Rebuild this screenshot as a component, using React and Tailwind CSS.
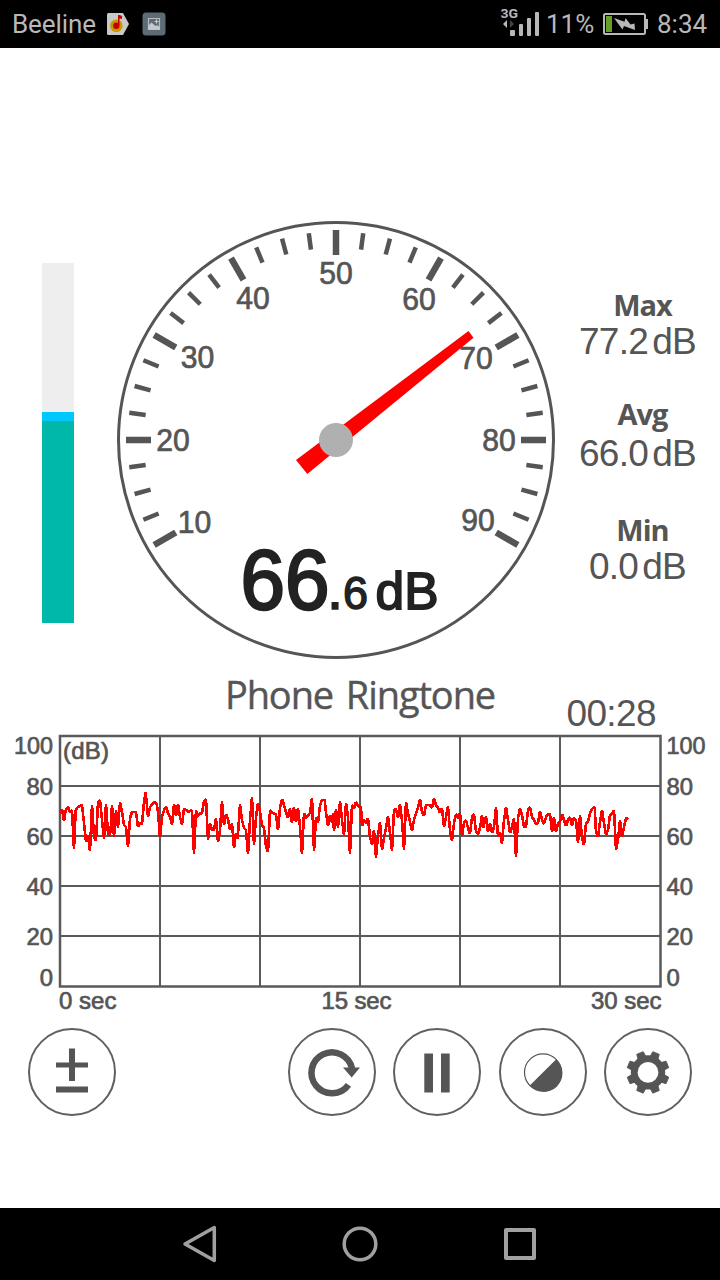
import { useState } from 'react';

const INK = '#555555';

const GAUGE_LABELS = [
  { value: 10, x: 194.5, y: 533 },
  { value: 20, x: 173, y: 451 },
  { value: 30, x: 197.5, y: 368 },
  { value: 40, x: 253, y: 308.5 },
  { value: 50, x: 336, y: 284 },
  { value: 60, x: 419, y: 309.5 },
  { value: 70, x: 476, y: 369 },
  { value: 80, x: 499, y: 451 },
  { value: 90, x: 478, y: 531 },
];

const STATS = [
  { label: 'Max', value: '77.2', className: 'mt-[70px]', valueClass: 'mt-px' },
  { label: 'Avg', value: '66.0', className: 'mt-9', valueClass: 'mt-1' },
  { label: 'Min', value: '0.0', className: 'mt-10', valueClass: 'mt-px' },
];

const Y_AXIS = [
  { value: 100, y: 754, width: 39 },
  { value: 80, y: 794.5, width: 26.5 },
  { value: 60, y: 844.5, width: 26.5 },
  { value: 40, y: 895, width: 26.5 },
  { value: 20, y: 945, width: 26.5 },
  { value: 0, y: 986, width: 13.3 },
];

// recorded samples as chart points
const SAMPLES = `60,813 62,809 64,821 65.7,810 68,807 70,812 72,810 74,849 75.7,810 78,807 82,805 84,823 86,842 88,835 90,851
92,805 94,837 96,841 98,803 100,800 102,820 104,839 106,804 108,834 110,835 111,824 112,805 114,837 116,810 118,828 120,802
122,812 124,825 126,827 128,847 130,818 132,812 136,812 138,827 140,823 142,824 144,802 145.7,792 148,817 150,807 154,802
156.7,804 158,812 160,837 162,817 164,810 166,807 168,813 170,817 172,825 174,804 176,816 178,804 180,817 182,825 184,809
186.7,810 188.7,812 192,810 194,854 196,810 197,817 199,814 202,813 204,801 206,799 208,840 210,823 212,830 214,830 216,818
218,842 220,830 222,801 224,825 226,814 228,819 230,830 232,823 234,848 236,833 237.7,839 240,804 242,820 244,828 246,830
248,854 250,820 252,797 254,845 256,817 258,803 260,812 262,825 264,828 266,847 268,852 270,810 272,813 276,814 278,830
280,808 282,799 284,805 286,812 288,818 290,808 292,823 294,807 296,822 298,808 300,827 302,854 304,813 306,818 310,813
312,798 314,851 316,817 318,823 320,805 322,800 324.7,800 326,813 328,826 330,815 332,823 333,813 334,831 336,809 338,828
340,801 342,820 344,835 346,803 348,817 350,854 352,805 354,808 356,802 358,806 361,807 362,826 364,820 366,823 368,818
370,837 372,845 374,830 376,858 378,835 380,822 382,850 384,838 386,828 388,816 390,833 392,851 394,810 396,809 398,818
400,804 402,820 404,850 406,802 408,813 410,822 412,831 414,820 416,813 418,808 420,799 422,812 424,816 426,805 430,805
432,808 434,798 436,805 438,808 440,813 442,808 444,827 446,817 448,806 450,830 452,841 454,823 456,814 458,818 460,813
462,836 464,823 466,820 468,828 470,834 472,817 474,814 476,832 478,834 480,828 482,815 483.3,828 486,816 488,832 490,823
492,833 494,827 496,807 498,837 500,832 502,844 504,820 506,807 508,820 510,833 512,827 514,818 516,857 518,818 520,808
522,815 524,827 526,827 528,810 530,807 532,817 534,820 536,824 538,823 540,811 542,820 544,824 546,817 548,814 550,814
552,832 554,817 556,832 558,823 560,822 562,814 564,820 566,826 568,820 570,817 572,826 573.3,818 576,820 578,843 580,815
582,838 584,845 586,823 588,822 590,813 592,809 594.7,807 596,832 598,837 600,822 602,810 604,823 606,835 608,830 610,815
612,814 614,810 616,850 618,840 620,820 622,837 624,827 626,818 628.7,819`;

function StatusBar() {
  return (
    <header className="flex h-12 items-center bg-black font-[Roboto,sans-serif] text-[26px] leading-12 text-[#b8b8b8]">
      <span className="ml-3 w-[84px] tracking-[-0.1px]">Beeline</span>
      <svg className="ml-2.5" width="24" height="24" viewBox="106 12 24 24">
        <path d="M108.5 13h14.5l6 11-6 11h-14.500q-1.500 0-1.500-1.500v-19q0-1.500 1.500-1.500z" fill="#c9c9c9" />
        <circle cx="116.300" cy="25.700" r="6.300" fill="#c99700" />
        <circle cx="116.300" cy="25.700" r="3.200" fill="#c00000" />
        <path d="M118 25.500v-10.500h1.500l2.500 1v3l-2.500-.5v7z" fill="#c80000" />
      </svg>
      <svg className="ml-3" width="24" height="24" viewBox="142 12 24 24">
        <rect x="142.500" y="12.500" width="23" height="23" rx="3.500" fill="#5d6b75" />
        <path d="M148.500 18.500h11v11h-11z" fill="none" stroke="#b8bcbe" strokeWidth="1.200" />
        <path d="M148.500 29.500v-4l3-3 4 3.500 1.500-1 2.500 2v2.500z" fill="#c5c9cb" />
        <path d="M156.500 19.500v4M154.500 21.500h4" stroke="#c5c9cb" strokeWidth="1.200" />
      </svg>
      <svg className="ml-auto" width="40" height="36" viewBox="501 6 40 36">
        <text x="501.500" y="18" fontSize="13.500" fontWeight="700" fill="#b8b8b8" textLength="17.500" lengthAdjust="spacingAndGlyphs">3G</text>
        <path d="M508 20v8l-4-4z" fill="#b8b8b8" />
        <path d="M511 20v8l4-4z" fill="#444444" />
        <g fill="#b8b8b8">
          <rect x="511" y="30" width="5" height="6" rx="1" />
          <rect x="520" y="24" width="4" height="12" rx="1" />
          <rect x="528" y="18" width="4" height="18" rx="1" />
          <rect x="536" y="12" width="4" height="24" rx="1" />
        </g>
      </svg>
      <span className="ml-[5px] w-[51px] pl-px">11%</span>
      <svg className="ml-1.5" width="46" height="24" viewBox="602 12 46 24">
        <rect x="604" y="14" width="41" height="20" rx="1.500" fill="none" stroke="#b8b8b8" strokeWidth="2" />
        <path d="M646 19h2v10h-2z" fill="#b8b8b8" />
        <rect x="606" y="16" width="6" height="16" fill="#669f28" />
        <path d="M614 18L624.500 21.800L625.500 18L630.500 24.500L634.500 23.500L635 30L624 26L622.500 29.500L618 23.500z" fill="#b8b8b8" />
      </svg>
      <span className="ml-2 w-16 pl-px">8:34</span>
    </header>
  );
}

function Gauge() {
  const ticks = Array.from({ length: 33 }, (_, i) => ({ angle: -120 + i * 7.5, major: i % 4 === 0 }));

  return (
    <svg
      className="ml-[41px] shrink-0 font-['Liberation_Sans',Arial,sans-serif]"
      width="442"
      height="442"
      viewBox="115 219 442 442"
    >
      <circle cx="336" cy="440" r="217.5" fill="none" stroke={INK} strokeWidth="3" />
      {ticks.map(({ angle, major }) => (
        <line
          key={angle}
          x1="336"
          x2="336"
          y1={major ? 230 : 231.5}
          y2={major ? 255 : 248}
          stroke={INK}
          strokeWidth={major ? 6.5 : 4.5}
          transform={`rotate(${angle} 336 440)`}
        />
      ))}
      <g fill={INK} stroke={INK} strokeWidth="0.7" fontSize="31" textAnchor="middle">
        {GAUGE_LABELS.map(({ value, x, y }) => (
          <text key={value} x={x} y={y} textLength="33.500" lengthAdjust="spacingAndGlyphs">{value}</text>
        ))}
      </g>
      <path d="M296 460L468.500 331L473.500 337.700L307.300 474z" fill="#ff0000" />
      <circle cx="336" cy="440" r="17" fill="#b0b0b0" />
      <g fill="#222222" stroke="#222222">
        <text x="240.500" y="609" fontSize="85" strokeWidth="2.500" textLength="89" lengthAdjust="spacingAndGlyphs">66</text>
        <text x="327" y="609" fontSize="58" strokeWidth="1.500">.</text>
        <text x="343" y="609" fontSize="47" strokeWidth="1.500" textLength="25" lengthAdjust="spacingAndGlyphs">6</text>
        <text x="375.500" y="608.500" fontSize="52" strokeWidth="1.800" textLength="63" lengthAdjust="spacingAndGlyphs">dB</text>
      </g>
    </svg>
  );
}

function Chart() {
  return (
    <svg
      className="-mt-2 font-['Liberation_Sans',Arial,sans-serif]"
      width="720"
      height="290"
      viewBox="0 726 720 290"
    >
      <g stroke="#5a5a5a" strokeWidth="2" fill="none">
        <path d="M160 736V986M260 736V986M360 736V986M460 736V986M560 736V986" />
        <path d="M60 786H660M60 836H660M60 886H660M60 936H660" />
        <rect x="60" y="736" width="600.500" height="250.500" strokeWidth="2.500" />
      </g>
      <g fill={INK} stroke={INK} strokeWidth="0.700" fontSize="24">
        {Y_AXIS.map(({ value, y, width }) => (
          <g key={value}>
            <text x="53" y={y} textAnchor="end" textLength={width} lengthAdjust="spacingAndGlyphs">{value}</text>
            <text x="666.500" y={y} textLength={width} lengthAdjust="spacingAndGlyphs">{value}</text>
          </g>
        ))}
        <text x="63" y="758.500" textLength="46">(dB)</text>
        <text x="59" y="1008.500" textLength="57.500">0 sec</text>
        <text x="321.500" y="1008.500" textLength="70">15 sec</text>
        <text x="591" y="1008.500" textLength="70.500">30 sec</text>
      </g>
      <polyline points={SAMPLES} fill="none" stroke="#ff0000" strokeWidth="2.600" strokeLinejoin="bevel" shapeRendering="crispEdges" />
    </svg>
  );
}

function RoundButton({ label, onClick, className = '', children }) {
  return (
    <button
      aria-label={label}
      onClick={onClick}
      className={`flex size-22 items-center justify-center rounded-full border-2 border-[#606060] ${className}`}
    >
      <svg width="60" height="60" viewBox="-30 -30.400 60 60" fill={INK}>
        {children}
      </svg>
    </button>
  );
}

function Toolbar() {
  const [paused, setPaused] = useState(false);

  return (
    <div className="mt-3 flex px-7">
      <RoundButton label="Calibrate">
        <path d="M-3-24h6v14h13v5h-13v13.500h-6v-13.500h-13v-5h13zM-16 14h32v6h-32z" />
      </RoundButton>
      <div className="ml-auto flex gap-[17.3px]">
        <RoundButton label="Restart">
          <path d="M16.500 12.500A20.500 20.500 0 1 1 20-4" fill="none" stroke={INK} strokeWidth="6.500" />
          <path d="M11-5H28L19.700 5z" />
        </RoundButton>
        <RoundButton label={paused ? 'Resume' : 'Pause'} onClick={() => setPaused(!paused)}>
          {paused ? <path d="M-11-19L19 0L-11 19z" /> : <path d="M-12.700-19h8.700v39h-8.700zM4-19h8.700v39h-8.700z" />}
        </RoundButton>
        <RoundButton label="Theme">
          <circle r="18.500" fill="none" stroke={INK} strokeWidth="1.200" />
          <path d="M13.200-13.200A18.700 18.700 0 1 1-13.200 13.200z" />
        </RoundButton>
        <RoundButton label="Settings">
          <circle r="13.800" fill="none" stroke={INK} strokeWidth="6.800" />
          {[22.5, 67.5, 112.5, 157.5, 202.5, 247.5, 292.5, 337.5].map((angle) => (
            <path key={angle} d="M-4.200-15L-3.500-21L3.500-21L4.200-15z" transform={`rotate(${angle})`} stroke={INK} strokeWidth="0.800" strokeLinejoin="round" />
          ))}
        </RoundButton>
      </div>
    </div>
  );
}

function NavBar() {
  return (
    <nav className="mt-auto flex h-18 items-center justify-center gap-30 bg-black">
      <svg width="40" height="40" viewBox="-20 -20 40 40" fill="none" stroke="#a0a0a0" strokeWidth="3.500" strokeLinejoin="round">
        <path d="M14.300-16.500v33L-15 0z" />
      </svg>
      <svg width="40" height="40" viewBox="-20 -20 40 40" fill="none" stroke="#a0a0a0" strokeWidth="3.500">
        <circle r="15.800" />
      </svg>
      <svg width="40" height="40" viewBox="-20 -20 40 40" fill="none" stroke="#a0a0a0" strokeWidth="4" strokeLinejoin="round">
        <rect x="-14" y="-14" width="28" height="28" />
      </svg>
    </nav>
  );
}

export default function App() {
  return (
    <div className="flex h-[1280px] w-[720px] flex-col overflow-hidden bg-white text-[#555555]">
      <StatusBar />

      {/* Level bar, dial and totals */}
      <div className="mt-[171px] flex pl-[42px]">
        <div className="mt-11 flex h-90 w-8 shrink-0 flex-col bg-[#eeeeee]">
          <div className="mt-auto h-[9px] bg-[#00c8ff]" />
          <div className="h-[202px] bg-[#00b8a9]" />
        </div>
        <Gauge />
        <div className="flex-1 pr-0.5 text-center">
          {STATS.map(({ label, value, className, valueClass }) => (
            <div key={label} className={className}>
              <div className="pl-2.5 font-['Open_Sans',sans-serif] text-[29px] leading-8 font-bold tracking-[-1px]">
                {label}
              </div>
              <div className={`flex justify-center gap-1 font-['Liberation_Sans',Arial,sans-serif] text-[37px] leading-10 tracking-[-0.7px] ${valueClass}`}>
                <span>{value}</span>
                <span>dB</span>
              </div>
            </div>
          ))}
        </div>
      </div>

      <h1 className="mt-[9px] text-center font-['Open_Sans',sans-serif] text-[38px] leading-12 tracking-[-1.1px] [word-spacing:4px] [-webkit-text-stroke:0.4px_#555555]">
        Phone Ringtone
      </h1>
      <div className="-mt-6 pr-16 text-right font-['Liberation_Sans',Arial,sans-serif] text-[37px] leading-10 tracking-[-0.6px]">
        00:28
      </div>

      <Chart />
      <Toolbar />
      <NavBar />
    </div>
  );
}
